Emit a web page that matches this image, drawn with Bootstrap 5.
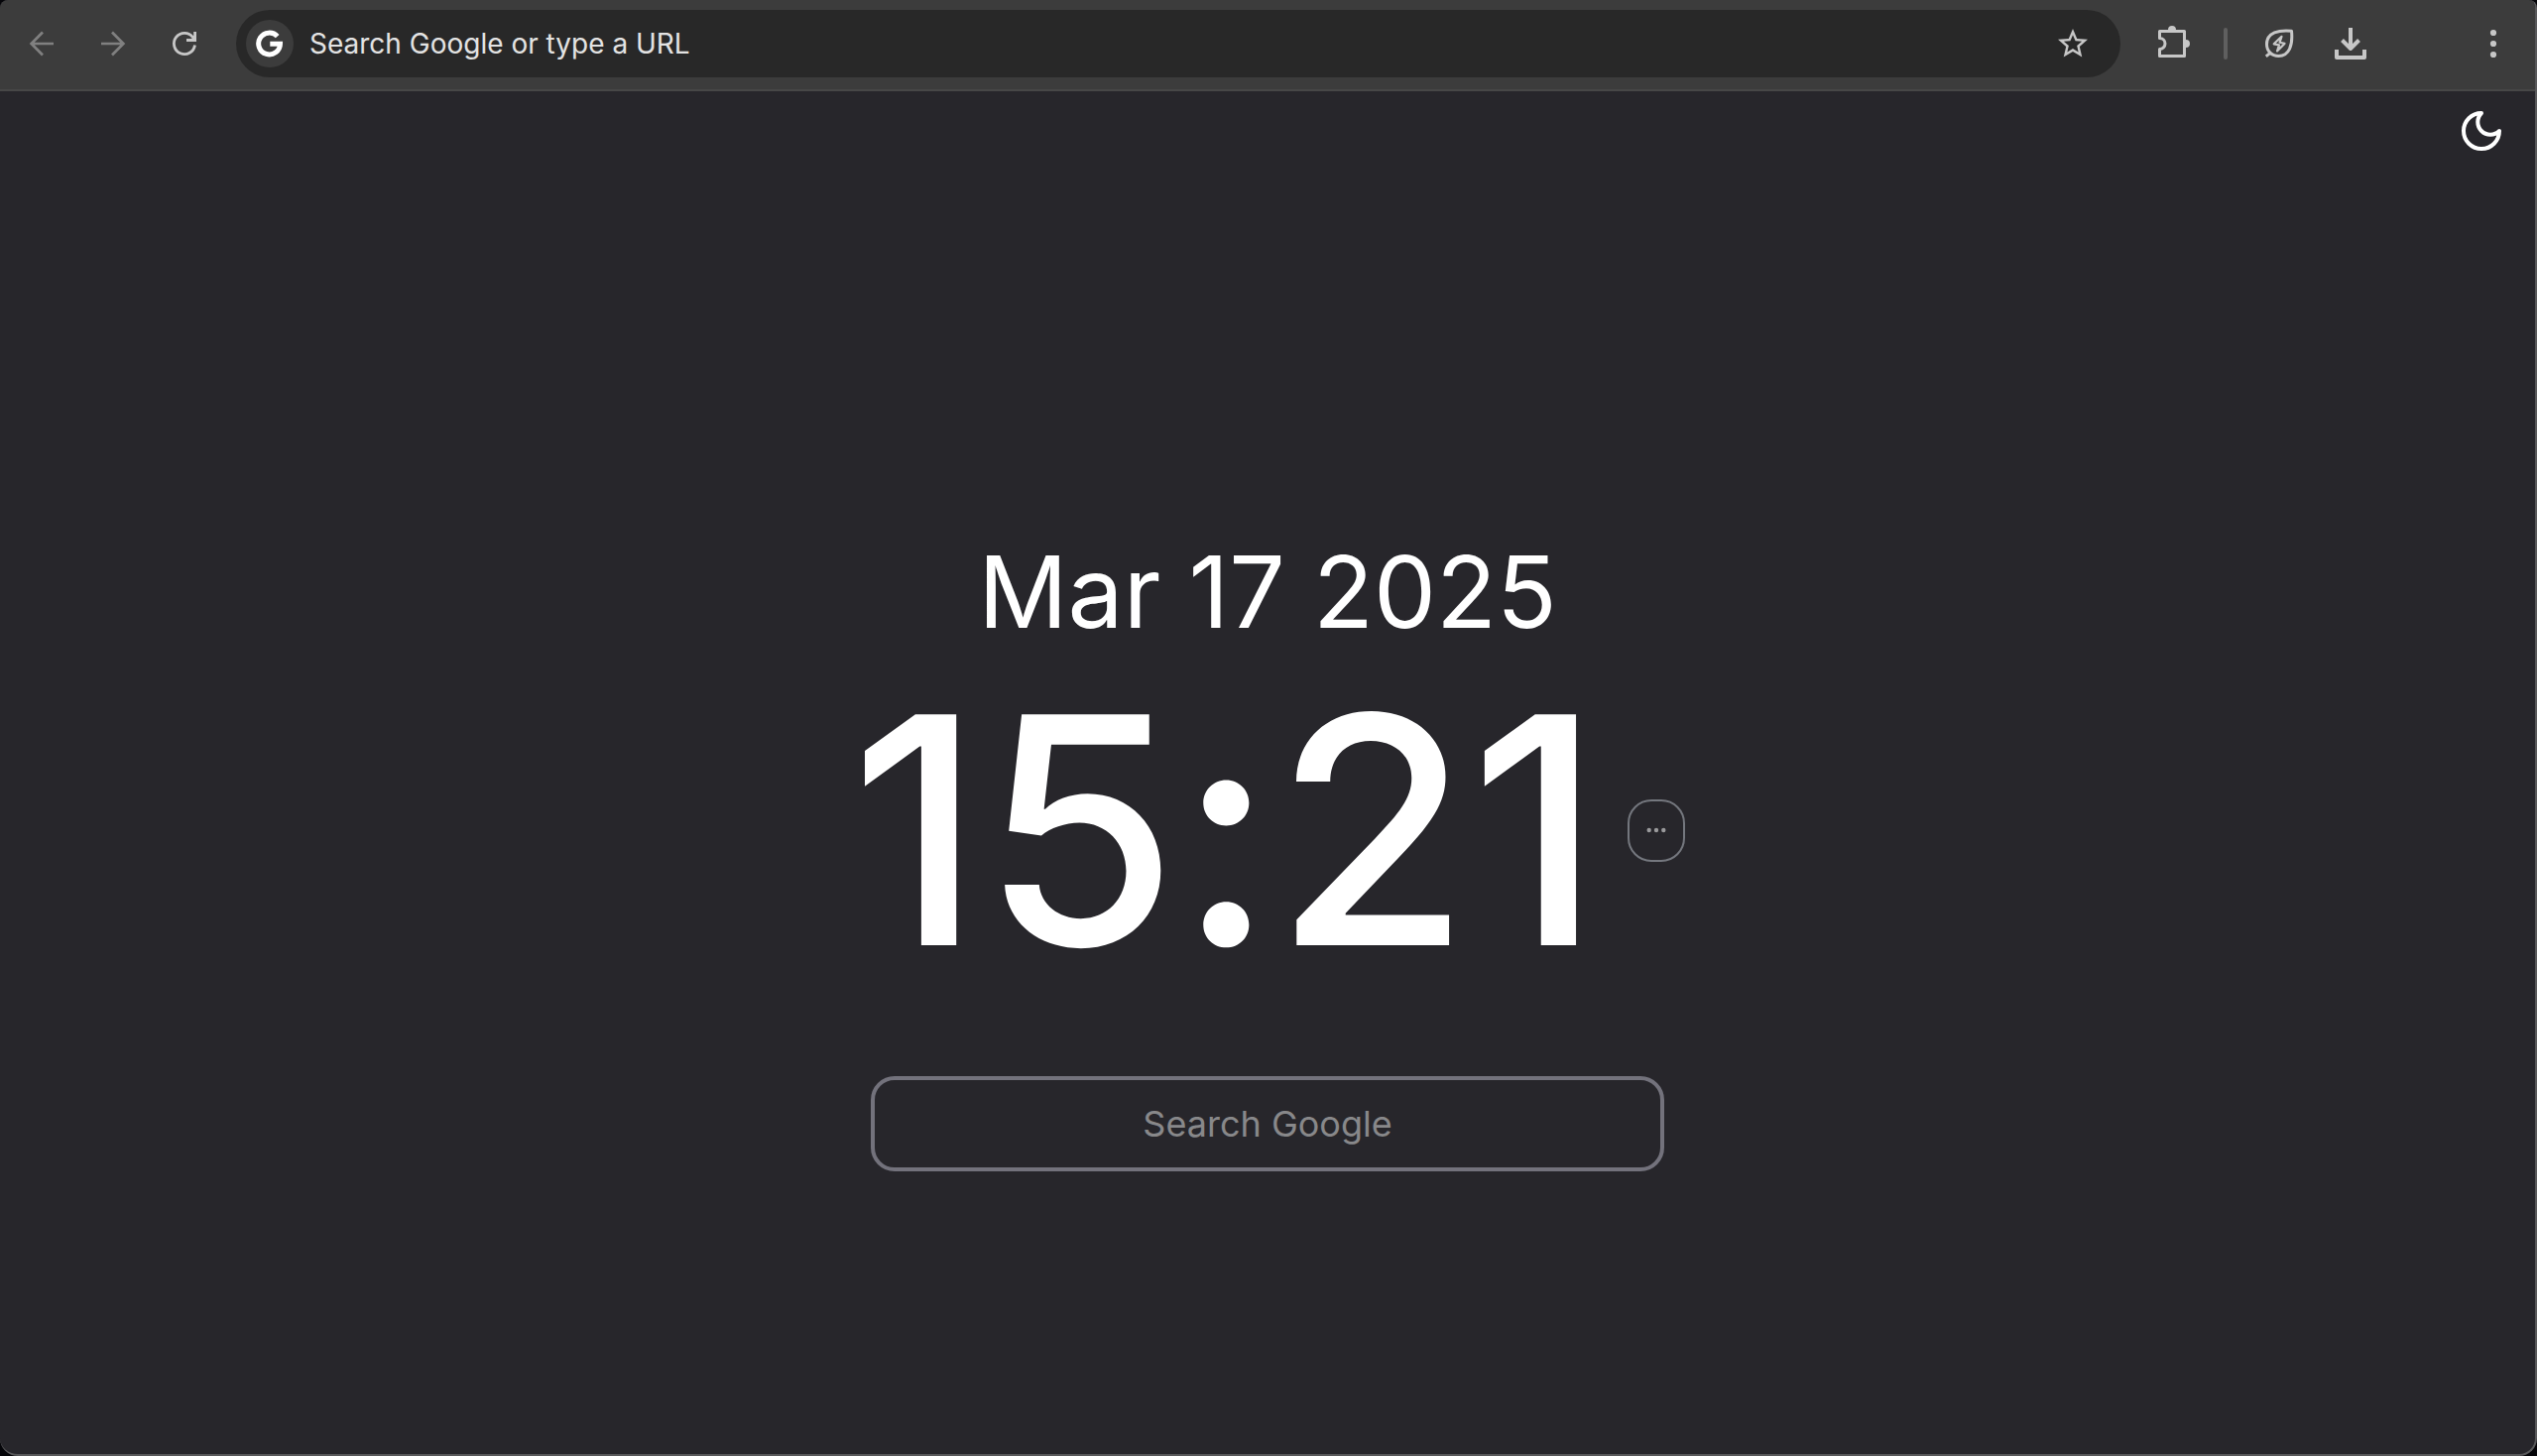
<!DOCTYPE html>
<html lang="en">
<head>
<meta charset="utf-8">
<meta name="viewport" content="width=device-width, initial-scale=1">
<title>New Tab</title>
<link href="https://cdn.jsdelivr.net/npm/bootstrap@5.3.0/dist/css/bootstrap.min.css" rel="stylesheet">
<style>
  body { font-family: Inter, "Liberation Sans", sans-serif; background: #050509; }
  .browser { background: #27262b; border-right: 2px solid #58585a; border-bottom: 2px solid #58585a; border-radius: 8px 8px 18px 18px; }
  .toolbar { background: #3c3c3c; border-bottom: 2px solid #474747; padding: 10px 6px 12px; }
  .tool { width: 72px; height: 68px; color: #c7c7c7; }
  .tool:disabled { color: #808080; opacity: 1; }
  .tool svg, .star svg { display: block; fill: none; stroke: currentColor; }
  .omnibox { height: 68px; background: #282828; margin: 0 16px; padding: 0 30px 0 10px; }
  .omnibox:focus-within { outline: 2px solid #8ab4f8; }
  .engine { width: 48px; height: 48px; background: #3c3c3c; }
  .omnibox input { font-size: 28px; line-height: 36px; color: #e3e3e3; margin-left: 16px; outline: 0; }
  .omnibox input::placeholder { color: #e3e3e3; opacity: 1; }
  .star { color: #c7c7c7; }
  .rule { width: 4px; height: 32px; margin: 0 16px; background: #5f5f5f; }
  .spare { width: 72px; }
  .theme { top: 16px; right: 30px; }
  main { padding-top: 158px; }
  .date { font-size: 100px; line-height: 124px; margin-bottom: 18px; }
  .clock { gap: 26px; }
  .time { font-size: 320px; line-height: 320px; font-weight: 500; font-feature-settings: "calt" 0; }
  .more { width: 58px; height: 63px; border: 2px solid #74777e; border-radius: 24px; color: #9a9a9c; }
  .search { width: 800px; max-width: 100%; margin-top: 88px; }
  .search input { height: 96px; font-size: 36px; line-height: 48px; border: 4px solid #73727c; border-radius: 24px; }
  .search input, .search input:focus { background: transparent; color: #fff; }
  .search input:focus { border-color: #9a99a5; box-shadow: none; }
  .search input::placeholder { color: #88888a; opacity: 1; }
</style>
</head>
<body>
<div class="browser d-flex flex-column min-vh-100 overflow-hidden">
  <header class="toolbar d-flex align-items-center">
    <button class="tool btn p-0 border-0 d-flex align-items-center justify-content-center" disabled aria-label="Back">
      <svg width="40" height="40" viewBox="0 0 40 40" stroke-width="2.7"><path d="M32 20H10M21 8.5 9.6 20 21 31.5"/></svg>
    </button>
    <button class="tool btn p-0 border-0 d-flex align-items-center justify-content-center" disabled aria-label="Forward">
      <svg width="40" height="40" viewBox="0 0 40 40" stroke-width="2.7"><path d="M8 20H30M19 8.5 30.4 20 19 31.5"/></svg>
    </button>
    <button class="tool btn p-0 border-0 d-flex align-items-center justify-content-center" aria-label="Reload">
      <svg width="40" height="40" viewBox="0 0 40 40" stroke-width="2.8"><path d="M30.5 21.5A10.6 10.6 0 1 1 28.5 13.7L30 16M30.6 8V16.5H22"/></svg>
    </button>
    <form class="omnibox d-flex align-items-center flex-grow-1 rounded-pill" onsubmit="return false">
      <span class="engine d-flex align-items-center justify-content-center rounded-circle flex-shrink-0">
        <svg width="28" height="28" viewBox="0 0 28 28" fill="none" stroke="#fff" stroke-width="5"><path d="M21.7 6.7A10.9 10.9 0 1 0 24.5 14.2H14.3"/></svg>
      </span>
      <input class="form-control-plaintext p-0" type="text" placeholder="Search Google or type a URL" aria-label="Address and search bar">
      <button class="star btn p-0 border-0" type="button" aria-label="Bookmark this tab">
        <svg width="36" height="36" viewBox="0 0 24 24"><path fill="currentColor" stroke="none" d="M22 9.24l-7.19-.62L12 2 9.19 8.63 2 9.24l5.46 4.73L5.82 21 12 17.27 18.18 21l-1.63-7.03L22 9.24zM12 15.4l-3.76 2.27 1-4.28-3.32-2.88 4.38-.38L12 6.1l1.71 4.04 4.38.38-3.32 2.88 1 4.28L12 15.4z"/></svg>
      </button>
    </form>
    <button class="tool btn p-0 border-0 d-flex align-items-center justify-content-center" aria-label="Extensions">
      <svg width="40" height="40" viewBox="0 0 40 40" stroke-width="3" stroke-linejoin="round"><path d="M7.5 14.5V7.5H32.5V32.5H7.5V25.5A5.5 5.5 0 0 0 7.5 14.5Z"/><path fill="currentColor" stroke="none" d="M16 7V6a4 4 0 0 1 8 0v1zM33 16h1a4 4 0 0 1 0 8h-1z"/><path stroke="#3c3c3c" stroke-width="3" d="M7.5 17V23"/></svg>
    </button>
    <span class="rule rounded-pill"></span>
    <button class="tool btn p-0 border-0 d-flex align-items-center justify-content-center" aria-label="Energy saver">
      <svg width="40" height="40" viewBox="0 0 40 40" stroke-width="3" stroke-linejoin="round"><path d="M32.5 7.2C20 6 7.5 8.5 7.5 20.5C7.5 27.5 12.5 32.5 19.5 32.5C30 32.5 34 22 32.5 7.2ZM6.8 32.8 12 28.5"/><path stroke-width="2.2" d="M22.5 12.8 14.7 20.3 20 21.3 18 27.5 25.5 19.9 20.5 18.8Z"/></svg>
    </button>
    <button class="tool btn p-0 border-0 d-flex align-items-center justify-content-center" aria-label="Downloads">
      <svg width="40" height="40" viewBox="0 0 40 40" stroke-width="4" stroke-linejoin="round"><path d="M20 4V25M11.5 16.5 20 25 28.5 16.5M6 26V34H34V26"/></svg>
    </button>
    <span class="spare"></span>
    <button class="tool btn p-0 border-0 d-flex align-items-center justify-content-center" aria-label="Menu">
      <svg width="40" height="40" viewBox="0 0 40 40"><g fill="currentColor" stroke="none"><circle cx="20" cy="9" r="3.1"/><circle cx="20" cy="20" r="3.1"/><circle cx="20" cy="31" r="3.1"/></g></svg>
    </button>
  </header>
  <main class="position-relative flex-grow-1 d-flex flex-column align-items-center justify-content-center text-white">
    <button class="theme btn p-0 border-0 position-absolute text-white" aria-label="Toggle dark mode">
      <svg class="d-block" width="48" height="48" viewBox="0 0 24 24" fill="none" stroke="currentColor" stroke-width="2" stroke-linecap="round" stroke-linejoin="round"><path d="M12 3a6 6 0 0 0 9 9 9 9 0 1 1-9-9Z"/></svg>
    </button>
    <div class="date">Mar 17 2025</div>
    <div class="clock d-flex align-items-center">
      <div class="time">15:21</div>
      <button class="more btn p-0 d-flex align-items-center justify-content-center" aria-label="Clock options">
        <svg width="20" height="6" viewBox="0 0 20 6" fill="currentColor"><circle cx="2.7" cy="3" r="2.2"/><circle cx="10" cy="3" r="2.2"/><circle cx="17.3" cy="3" r="2.2"/></svg>
      </button>
    </div>
    <form class="search" onsubmit="return false">
      <input class="form-control text-center" type="text" placeholder="Search Google" aria-label="Search Google">
    </form>
  </main>
</div>
<script src="https://cdn.jsdelivr.net/npm/bootstrap@5.3.0/dist/js/bootstrap.bundle.min.js"></script>
</body>
</html>
